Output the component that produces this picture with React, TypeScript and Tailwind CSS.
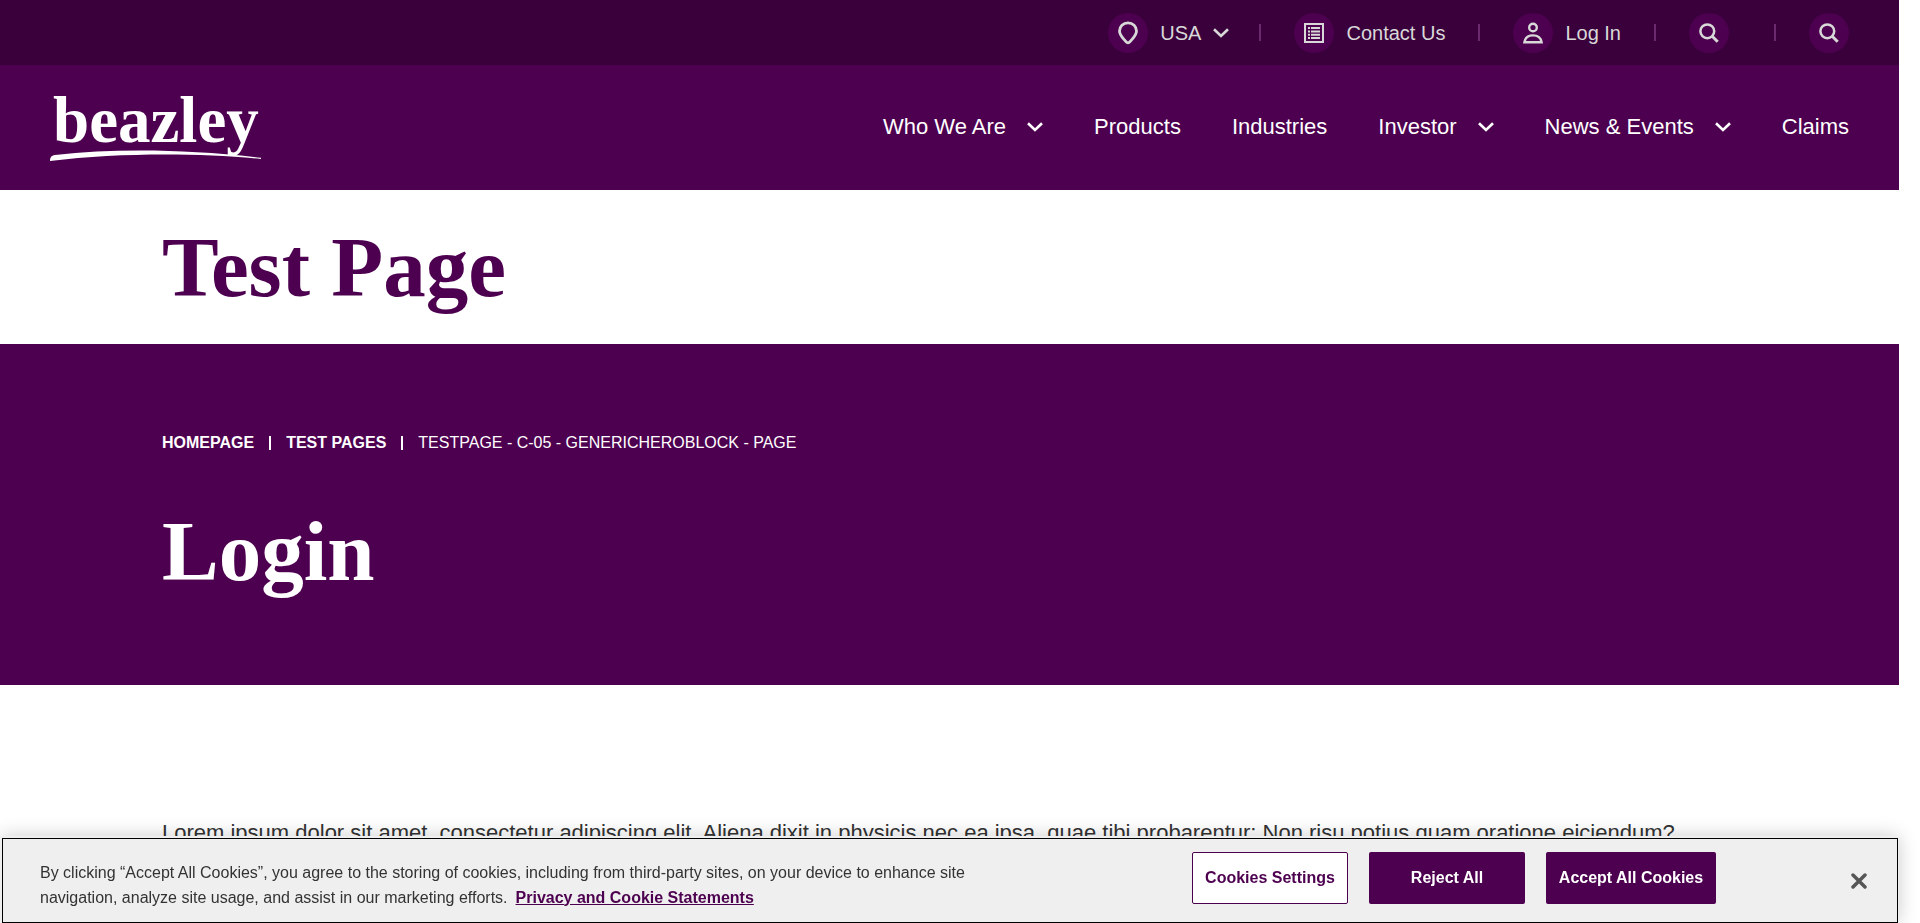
import type { ReactNode } from "react";

function Chevron({ className = "" }: { className?: string }) {
  return (
    <svg className={className} width="16" height="10" viewBox="0 0 16 10" fill="none" stroke="currentColor" strokeWidth="2.6" aria-hidden="true">
      <path d="M1 1.2 8 8 15 1.2" />
    </svg>
  );
}

function PinIcon() {
  return (
    <svg width="20" height="24" viewBox="0 0 20 24" fill="none" stroke="currentColor" strokeWidth="2.8" aria-hidden="true">
      <path d="M10 1.8c-4.900 0-8.500 3.600-8.500 8.200 0 4.700 4.100 7.500 6.700 10.900.9 1.200 2.700 1.200 3.600 0 2.600-3.400 6.700-6.200 6.700-10.900 0-4.600-3.600-8.200-8.500-8.200Z" />
    </svg>
  );
}

function ListIcon() {
  return (
    <svg width="20" height="20" viewBox="0 0 20 20" fill="none" stroke="currentColor" strokeWidth="2" aria-hidden="true">
      <rect x="1" y="1" width="18" height="18" />
      <path d="M4 5h2M4 8.400h2M4 11.700h2M4 15h2M7 5h9M7 8.400h9M7 11.700h9M7 15h9" />
    </svg>
  );
}

function UserIcon() {
  return (
    <svg width="20" height="22" viewBox="0 0 20 22" fill="none" stroke="currentColor" strokeWidth="2.400" aria-hidden="true">
      <circle cx="10" cy="5.500" r="3.800" />
      <path d="M1.400 20.300c.7-4.300 4.100-6.900 8.600-6.900s7.900 2.600 8.600 6.900Z" />
    </svg>
  );
}

function SearchIcon() {
  return (
    <svg width="20" height="20" viewBox="0 0 20 20" fill="none" stroke="currentColor" strokeWidth="2.500" aria-hidden="true">
      <circle cx="8.300" cy="8.300" r="6.900" />
      <path d="m13.200 13.200 5.500 5.500" strokeWidth="3" />
    </svg>
  );
}

function IconDisc({ children }: { children: ReactNode }) {
  return <span className="flex size-10 items-center justify-center rounded-full bg-[#4d004f]">{children}</span>;
}

function Divider() {
  return <span className="h-[17px] w-[2px] bg-[#6b2a6d]" />;
}

function Logo() {
  return (
    <svg width="212" height="92" viewBox="0 0 212 92" role="img" aria-label="beazley" fill="#fff">
      <text x="3" y="60" fontFamily='"Liberation Serif", serif' fontWeight="700" fontSize="65">
        beazley
      </text>
      <path d="M0 79c0-3 1-5.500 5-6 60-6.500 130-6 206 2.800v1.200C150 71 70 70.500 0 79Z" />
    </svg>
  );
}

const nav = [
  { label: "Who We Are", menu: true },
  { label: "Products", menu: false },
  { label: "Industries", menu: false },
  { label: "Investor", menu: true },
  { label: "News & Events", menu: true },
  { label: "Claims", menu: false },
];

export default function App() {
  return (
    <div className="h-screen overflow-hidden bg-white pr-[21px] font-['Liberation_Sans',sans-serif]">
      <header className="text-white">
        <div className="flex h-[65px] items-center justify-end bg-[#3a003b] pr-[50px] text-[20px] leading-6 text-[#d8d8d8]">
          <button type="button" className="mr-[30px] flex items-center gap-3">
            <IconDisc><PinIcon /></IconDisc>
            USA
            <Chevron />
          </button>
          <Divider />
          <a href="#contact" className="mx-[33px] flex items-center gap-3">
            <IconDisc><ListIcon /></IconDisc>
            Contact Us
          </a>
          <Divider />
          <a href="#login" className="mx-[33px] flex items-center gap-3">
            <IconDisc><UserIcon /></IconDisc>
            Log In
          </a>
          <Divider />
          <button type="button" aria-label="Search" className="mr-[45px] ml-[33px]"><IconDisc><SearchIcon /></IconDisc></button>
          <Divider />
          <button type="button" aria-label="Search site" className="ml-[33px]"><IconDisc><SearchIcon /></IconDisc></button>
        </div>
        <div className="flex h-[125px] items-center justify-between bg-[#4d004f] px-[50px]">
          <a href="#home"><Logo /></a>
          <nav className="flex items-center gap-[51px] pb-[2px] text-[22px] leading-7">
            {nav.map((item) => (
              <a key={item.label} href="#nav" className="flex items-center gap-[21px]">
                {item.label}
                {item.menu && <Chevron />}
              </a>
            ))}
          </nav>
        </div>
      </header>
      <main>
        <section className="flex h-[154px] items-center bg-white px-[162px]">
          <h1 className="font-['Liberation_Serif',serif] text-[85px] leading-[96px] font-bold text-[#4d004f]">Test Page</h1>
        </section>
        <section className="h-[341px] bg-[#4d004f] px-[162px] pt-[87px] text-white">
          <nav aria-label="Breadcrumb" className="flex items-center gap-[15px] text-[16px] leading-6">
            <a href="#home" className="font-bold">HOMEPAGE</a>
            <span className="h-[14px] w-[2px] bg-white" />
            <a href="#tests" className="font-bold">TEST PAGES</a>
            <span className="h-[14px] w-[2px] bg-white" />
            <span>TESTPAGE - C-05 - GENERICHEROBLOCK - PAGE</span>
          </nav>
          <h2 className="mt-12 font-['Liberation_Serif',serif] text-[85px] leading-[96px] font-bold">Login</h2>
        </section>
        <p className="px-[162px] pt-[134px] text-[22px] leading-7 whitespace-nowrap text-[#333]">
          Lorem ipsum dolor sit amet, consectetur adipiscing elit. Aliena dixit in physicis nec ea ipsa, quae tibi probarentur; Non risu potius quam oratione eiciendum?
        </p>
      </main>
      <div role="dialog" aria-label="Cookie consent" className="fixed right-[21px] bottom-0 left-0 bg-[#efefef] pt-[2px] pr-px pl-[2px] shadow-[0_0_18px_rgba(0,0,0,0.2)]">
        <div className="flex h-[85px] items-center border border-black pr-[30px] pl-[37px]">
          <p className="flex-1 pt-2 text-[16px] leading-[25px] text-[#333]">
            By clicking “Accept All Cookies”, you agree to the storing of cookies, including from third-party sites, on your device to enhance site
            <br />
            navigation, analyze site usage, and assist in our marketing efforts.
            <a href="#privacy" className="ml-2 font-bold text-[#4d004f] underline">Privacy and Cookie Statements</a>
          </p>
          <div className="mr-[135px] mb-[6px] flex gap-[21px] text-[16px] font-bold">
            <button type="button" className="h-[52px] w-[156px] rounded-[2px] border border-[#4d004f] bg-white text-[#4d004f]">Cookies Settings</button>
            <button type="button" className="h-[52px] w-[156px] rounded-[2px] bg-[#4d004f] text-white">Reject All</button>
            <button type="button" className="h-[52px] w-[170px] rounded-[2px] bg-[#4d004f] text-white">Accept All Cookies</button>
          </div>
          <button type="button" aria-label="Close" className="text-[#565656]">
            <svg width="16" height="16" viewBox="0 0 16 16" fill="none" stroke="currentColor" strokeWidth="3.500" strokeLinecap="round" aria-hidden="true">
              <path d="m2 2 12 12M14 2 2 14" />
            </svg>
          </button>
        </div>
      </div>
    </div>
  );
}
